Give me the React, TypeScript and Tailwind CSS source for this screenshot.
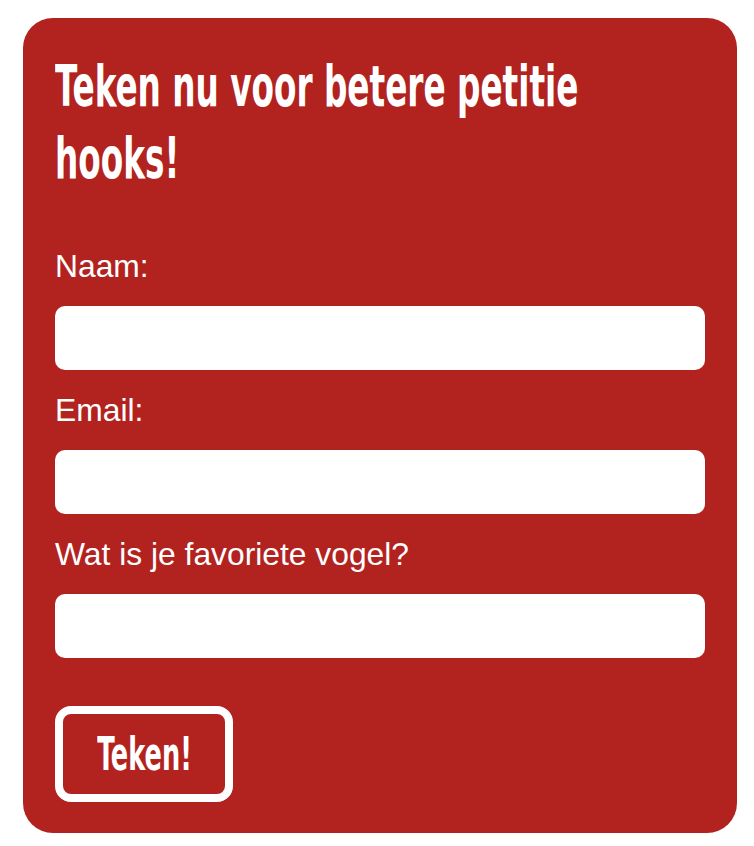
// no narrow display face is installed, so the condensed bold look is made
// from DejaVu Sans Condensed Bold, squeezed a little and stretched upward
const headingFont = "font-['DejaVu_Sans_Condensed','DejaVu_Sans',sans-serif] font-bold";

const headingLines = ['Teken nu voor betere petitie', 'hooks!'];

const fields = [
  { id: 'naam', label: 'Naam:', type: 'text' },
  { id: 'email', label: 'Email:', type: 'email' },
  { id: 'vogel', label: 'Wat is je favoriete vogel?', type: 'text' },
];

export default function App() {
  return (
    <div className="min-h-screen bg-white pt-[18px] pl-[23px]">
      <form
        className="w-[714px] rounded-[30px] bg-[#b2231f] px-8 pt-8 pb-[31px] text-white"
        onSubmit={(e) => e.preventDefault()}
      >
        <h1 className={`${headingFont} mb-[54px] text-[46px] leading-[72px]`}>
          {headingLines.map((line) => (
            <span
              key={line}
              className="block whitespace-nowrap origin-left scale-x-[0.79] scale-y-[1.25]"
            >
              {line}
            </span>
          ))}
        </h1>

        {fields.map((field) => (
          <div key={field.id} className="flex flex-col">
            <label
              htmlFor={field.id}
              className="font-['Liberation_Sans',Arial,sans-serif] text-[31.8px] leading-9 mb-[22px]"
            >
              {field.label}
            </label>
            <input
              id={field.id}
              type={field.type}
              className="h-16 w-full rounded-[10px] bg-white mb-[22px] px-4 text-2xl text-black outline-none"
            />
          </div>
        ))}

        <button
          type="submit"
          className="mt-[26px] flex h-24 w-[178px] items-center justify-center rounded-[16px] border-8 border-white"
        >
          <span
            className={`${headingFont} inline-block text-[37px] leading-none text-white scale-x-[0.77] scale-y-[1.26]`}
          >
            Teken!
          </span>
        </button>
      </form>
    </div>
  );
}
